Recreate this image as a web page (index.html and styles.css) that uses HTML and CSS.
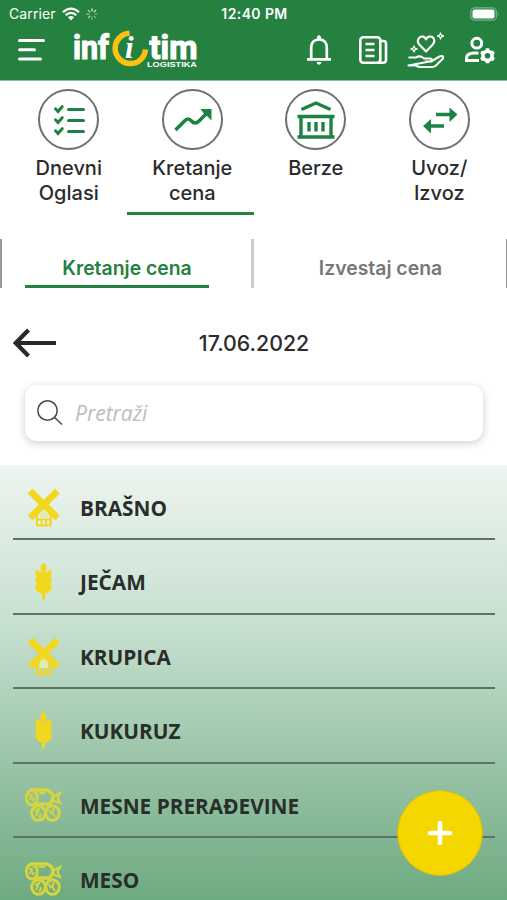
FILE: index.html
```html
<!DOCTYPE html>
<html lang="sr-Latn">
<head>
<meta charset="utf-8">
<title>Infotim Logistika</title>
<link rel="stylesheet" href="styles.css">
</head>
<body>
<svg class="defs" width="0" height="0">
  <defs>
    <symbol id="mill" viewBox="0 0 38 44">
      <g stroke="currentColor" fill="none">
        <path d="M8.500 7.500 31 29.500M31 7.500 8.500 29.500" stroke-width="6.800" stroke-linecap="square"/>
        <path d="M13 39V30Q14 22 19.700 22T26.500 30V39" stroke-width="1.800"/>
        <path d="M12 33.500H27.500M12 39.500H27.500M12.800 33V39M17.500 33V39M22 33V39M26.800 33V39" stroke-width="1.900"/>
      </g>
      <path d="M15.500 33V29Q16.500 24 19.700 24T24 29V33Z" fill="#e3ebb4"/>
    </symbol>
    <symbol id="wheat" viewBox="0 0 38 44">
      <g fill="currentColor" stroke="currentColor" stroke-width="1.300">
        <path d="M19.500 3.500Q14.500 8 19.500 13.500Q24.500 8 19.500 3.500Z"/>
        <path id="grains" d="M12 11Q18.500 11.500 19 19Q11.500 18.500 12 11ZM27 11Q20.500 11.500 20 19Q27.500 18.500 27 11Z"/>
        <use href="#grains" y="7"/>
        <use href="#grains" y="14"/>
        <path d="M18.700 11H20.300V39H18.700Z"/>
      </g>
    </symbol>
    <symbol id="meat" viewBox="0 0 38 44">
      <g fill="none" stroke="currentColor" stroke-width="2">
        <path d="M7 6H21Q27 6 29 12Q29.500 17 25 20H12" stroke-width="3.400"/>
        <ellipse cx="7.800" cy="13.500" rx="5.500" ry="7.500" stroke-width="2.800"/>
        <path d="M5 10 8 12 5.500 16M9.500 9V10M10 14 8.500 17M15 9H21M28 13 36 9 33.500 14 36 19 28 16" stroke-width="2.200"/>
        <ellipse cx="14.500" cy="29" rx="6.800" ry="7.300" stroke-width="3"/>
        <ellipse cx="28.500" cy="29" rx="6.800" ry="7.300" stroke-width="3"/>
        <path d="M11 27 15 25 12 32M17 29 15.500 34M25 26 27 30M30 24 28.500 29 31 33"/>
      </g>
    </symbol>
  </defs>
</svg>

<div class="app">
  <header class="header">
    <div class="status">
      <div class="status-left">
        <span class="carrier">Carrier</span>
        <svg width="18" height="14" viewBox="0 0 18 14"><g fill="none" stroke="#fff" stroke-width="2.300"><path d="M1 5.200Q9-2 17 5.200M3.700 8.200Q9 3.600 14.300 8.200"/></g><path d="M6 10.200Q9 8 12 10.200L9 13.500Z" fill="#fff"/></svg>
        <svg class="spinner" width="12" height="12" viewBox="0 0 12 12"><g stroke="#fff" stroke-width="1.200" stroke-linecap="round"><path d="M6 .8V3M9.700 2.300 8.100 3.900" opacity=".9"/><path d="M11.200 6H9M9.700 9.700 8.100 8.100M6 11.200V9" opacity=".45"/><path d="M2.300 9.700 3.900 8.100M.8 6H3M2.300 2.300 3.900 3.900" opacity=".7"/></g></svg>
      </div>
      <time class="clock">12:40 PM</time>
      <svg class="battery" width="30" height="14" viewBox="0 0 30 14"><rect x=".8" y=".8" width="25.500" height="12.400" rx="3.800" fill="none" stroke="#fff" stroke-opacity=".4" stroke-width="1.200"/><rect x="2.500" y="2.500" width="22" height="9" rx="2" fill="#fff"/><path d="M27.800 5Q29.600 7 27.800 9Z" fill="#fff" fill-opacity=".5"/></svg>
    </div>
    <div class="toolbar">
      <svg class="burger" width="28" height="24" viewBox="0 0 28 24"><path d="M2.500 2.500H26.500M2.500 11.800H17.500M2.500 21H23.500" stroke="#fff" stroke-width="3" stroke-linecap="round"/></svg>
      <svg class="logo" width="126" height="40" viewBox="0 0 126 40">
        <g class="logo-word" fill="#fff" stroke="#fff" stroke-width="1.100">
          <text x="0" y="31" textLength="36" lengthAdjust="spacingAndGlyphs">inf</text>
          <text x="76.500" y="31" textLength="48" lengthAdjust="spacingAndGlyphs">tim</text>
        </g>
        <path d="M56.500 5.200A15.200 15.200 0 1 0 72.500 21.500" fill="none" stroke="#fcc211" stroke-width="5.500"/>
        <text class="logo-i" x="52" y="29.500" fill="#fff">i</text>
        <text class="logo-sub" x="74" y="39" textLength="50" lengthAdjust="spacingAndGlyphs" fill="#fff">LOGISTIKA</text>
      </svg>
      <nav class="actions">
        <svg width="26" height="32" viewBox="0 0 26 32"><path d="M5.200 25V14Q5.200 5.500 13 5.500T20.800 14V25" fill="none" stroke="#fff" stroke-width="2.700"/><path d="M1 24H25V26.700H1ZM10.500 28H15.500Q15 30.800 13 30.800T10.500 28ZM10.800 5Q10.800 1.300 13 1.300T15.200 5Z" fill="#fff"/></svg>
        <svg width="30" height="30" viewBox="0 0 30 30"><g fill="none" stroke="#fff" stroke-width="2.600"><rect x="2.300" y="2.300" width="20" height="25.400" rx="3"/><path d="M22.500 6H25.500Q28 6 28 8.500V25Q28 27.700 25 27.700H20M7.500 9H16.500M7.500 15H16.500M7.500 21H16.500"/></g></svg>
        <svg width="38" height="38" viewBox="0 0 38 38"><g fill="none" stroke="#fff" stroke-width="2.100" stroke-linejoin="round"><path d="M19 19.500 12.200 12.500Q9.300 8.500 12.500 5.500C15 3.500 18 4.500 19 7.500C20 4.500 23.500 3.500 26 5.500Q28.700 8.500 25.800 12.500Z"/><path d="M1.500 25.500H9Q12 23.500 15 25L17 26.500H23Q26 27 24.500 29.500H18M25 29 32.500 24.500Q37 23 36 26.500L29 33.500Q27.500 35 25 35H12L9 33.500H1.500Z"/></g><g fill="none" stroke="#fff" stroke-width="1.300"><path d="M33.500 2 35.500 4 33.500 6 31.500 4ZM7 15 9 17 7 19 5 17Z"/><path d="M33.500.500V2M33.500 6V7.500M30 4H31.500M35.500 4H37M7 13.500V15M7 19V20.500M3.500 17H5M9 17H10.500"/></g></svg>
        <svg width="32" height="28" viewBox="0 0 32 28"><circle cx="12.800" cy="7.200" r="4.900" fill="none" stroke="#fff" stroke-width="3"/><path d="M14.500 17.200Q2.500 16 2.500 22.500V24.500H15" fill="none" stroke="#fff" stroke-width="3"/><circle cx="23.500" cy="19.800" r="4.600" fill="none" stroke="#fff" stroke-width="3.600"/><path d="M23.500 12.300V15M23.500 24.600V27.300M17 16 19.200 17.300M27.800 22.300 30 23.600M17 23.600 19.200 22.300M27.800 17.300 30 16" stroke="#fff" stroke-width="3.600"/></svg>
      </nav>
    </div>
  </header>

  <nav class="categories">
    <a class="category">
      <span class="ring"><svg width="58" height="58" viewBox="0 0 58 58"><g fill="none" stroke="#1d8340" stroke-width="3" stroke-linecap="round"><path d="M28.500 18.500H43.500M28.500 29.500H43.500M28.500 40.500H43.500"/><path d="M15.500 17.800 18 20.500 22.200 15.700M15.500 28.800 18 31.500 22.200 26.700M15.500 39.800 18 42.500 22.200 37.700"/></g></svg></span>
      <span class="label">Dnevni<br>Oglasi</span>
    </a>
    <a class="category active">
      <span class="ring"><svg width="58" height="58" viewBox="0 0 58 58"><path d="M11.500 39 20.500 30Q24 26 27.500 30T35 30L43.500 21.500" fill="none" stroke="#1d8340" stroke-width="3.600"/><path d="M36.500 18H47.500V29.500L44 26 39.500 22Z" fill="#1d8340"/></svg></span>
      <span class="label">Kretanje<br>cena</span>
    </a>
    <a class="category">
      <span class="ring"><svg width="58" height="58" viewBox="0 0 58 58"><g fill="none" stroke="#1d8340" stroke-width="3.400"><path d="M14.500 18.500 29 12 43.500 18.500"/><path d="M10.500 25.500H47.500M10.500 46H47.500M14 25.500V46M44 25.500V46"/><path d="M22 31V40.500M29 31V40.500M36 31V40.500"/></g></svg></span>
      <span class="label">Berze</span>
    </a>
    <a class="category">
      <span class="ring"><svg width="58" height="58" viewBox="0 0 58 58"><path d="M25 23.500H40M33 35H18" stroke="#1d8340" stroke-width="3.300"/><path d="M38.500 16.500 46.500 23.500 38.500 31ZM20 28 12 35 20 42.500Z" fill="#1d8340"/></svg></span>
      <span class="label">Uvoz/<br>Izvoz</span>
    </a>
  </nav>

  <div class="tabs">
    <a class="tab selected"><span>Kretanje cena</span></a>
    <a class="tab"><span>Izvestaj cena</span></a>
  </div>

  <div class="date-bar">
    <svg width="44" height="30" viewBox="0 0 44 30"><path d="M2.500 15H43M15.500 2 2.800 15 15.500 28" fill="none" stroke="#292929" stroke-width="4.200"/></svg>
    <span class="date">17.06.2022</span>
  </div>

  <label class="search">
    <svg width="26" height="26" viewBox="0 0 26 26"><g fill="none" stroke="#474747" stroke-width="1.500"><circle cx="10.500" cy="10.500" r="9.700"/><path d="M17.300 17.300 25 24.500"/></g></svg>
    <input type="text" placeholder="Pretraži">
  </label>

  <ul class="products">
    <li><svg class="icon"><use href="#mill"/></svg><span>BRAŠNO</span></li>
    <li><svg class="icon"><use href="#wheat"/></svg><span>JEČAM</span></li>
    <li><svg class="icon"><use href="#mill"/></svg><span>KRUPICA</span></li>
    <li><svg class="icon"><use href="#wheat"/></svg><span>KUKURUZ</span></li>
    <li><svg class="icon meat"><use href="#meat"/></svg><span>MESNE PRERAĐEVINE</span></li>
    <li><svg class="icon meat"><use href="#meat"/></svg><span>MESO</span></li>
  </ul>

  <button class="add" aria-label="Dodaj"><svg width="26" height="26" viewBox="0 0 26 26"><path d="M13 3V23M3 13H23" stroke="#fff" stroke-width="4.600" stroke-linecap="round"/></svg></button>
</div>
</body>
</html>
```
FILE: styles.css
```css
* { box-sizing: border-box; }
body { margin: 0; background: #fff; font-family: Inter, "Liberation Sans", sans-serif; color: #2b2b2b; }
svg { display: block; flex: none; }
.defs { position: absolute; }
.app { position: relative; width: 507px; height: 900px; overflow: hidden; display: flex; flex-direction: column; }

.header { height: 80px; flex: none; background: #25813f; box-shadow: 0 1px 0 #8fc19d; color: #fff; }
.status { height: 27px; display: grid; grid-template-columns: 1fr auto 1fr; align-items: center; padding: 0 7px 0 9px; }
.status-left { display: flex; align-items: center; gap: 6px; }
.carrier { font-size: 14px; letter-spacing: .1px; }
.clock { font-size: 14px; font-weight: 600; letter-spacing: .4px; }
.battery { justify-self: end; }
.toolbar { height: 53px; display: flex; align-items: flex-start; padding: 0 11px 0 17px; }
.burger { margin-top: 11px; }
.logo { margin: 1px 0 0 28px; }
.logo-word { font: 700 33px Roboto, sans-serif; }
.logo-i { font: italic 700 31px "Liberation Serif", serif; }
.logo-sub { font: 700 7px "Liberation Sans", sans-serif; }
.actions { margin-left: auto; display: flex; align-items: center; height: 46px; gap: 26px; }
.actions svg:nth-child(-n+2) { margin-right: -1px; }
.actions svg:nth-child(1) { margin-right: 0; }
.actions svg:nth-child(3) { margin: 1px -7px -1px -6px; }

.categories { display: grid; grid-template-columns: repeat(4, 1fr); height: 135px; padding: 0 6px 0 7px; flex: none; }
.category { display: flex; flex-direction: column; align-items: center; padding-top: 9px; border-bottom: 3px solid transparent; }
.category.active { margin: 0 0 0 -3.500px; padding-left: 3.500px; border-color: #25813f; }
.ring { width: 61px; height: 61px; border: 2px solid #707070; border-radius: 50%; display: grid; place-items: center; }
.label { margin-top: 6px; font-size: 20px; line-height: 25px; text-align: center; font-weight: 450; }

.tabs { display: grid; grid-template-columns: 1fr 1fr; height: 49px; margin-top: 24px; flex: none; border-left: 2px solid #999; border-right: 1px solid #999; }
.tab { display: flex; justify-content: center; font-size: 19.4px; font-weight: 600; color: #777; }
.tab.selected { justify-content: flex-start; padding-left: 23px; color: #25813f; border-right: 3px solid #ccc; }
.tab span { width: 184px; padding: 18px 0 0 1px; line-height: 23px; text-align: center; border-bottom: 3px solid transparent; }
.tab.selected span { padding-left: 20px; border-color: #25813f; }

.date-bar { display: grid; grid-template-columns: 44px 1fr 44px; align-items: center; height: 50px; margin: 30px 12px 0 13px; flex: none; }
.date { text-align: center; font-size: 21.3px; font-weight: 450; }

.search { display: flex; align-items: center; gap: 12px; height: 56px; margin: 17px 24px 0 25px; padding: 0 12px; flex: none; border-radius: 12px; background: #fff; box-shadow: 0 2px 8px rgba(0, 0, 0, .2); }
.search input { flex: 1; min-width: 0; padding: 0; border: 0; outline: 0; background: none; font: italic 21px "Open Sans", sans-serif; }
.search input::placeholder { color: #bcbcbc; opacity: 1; }

.products { flex: none; height: 436px; margin: 24px 0 0; padding: 0 12px 0 13px; list-style: none; background: linear-gradient(#edf5f0 0, #c9e1d1 35%, #9fc7ac 65%, #6daa80 100%); }
.products li { display: flex; align-items: center; height: 74.5px; padding-top: 12px; border-bottom: 2px solid #5c7563; font: 700 20.8px "Open Sans", sans-serif; }
.products li:first-child { height: 75px; }
.icon { width: 38px; height: 44px; margin: 0 18px 0 11px; color: #f2d71d; }
.icon.meat { color: #d5d63e; }
.products span { color: #292e2a; }

.add { position: absolute; left: 397px; top: 790px; width: 86px; height: 86px; border: 1.5px solid #d5bc19; border-radius: 50%; background: #f4d600; display: grid; place-items: center; padding: 0; }
```
